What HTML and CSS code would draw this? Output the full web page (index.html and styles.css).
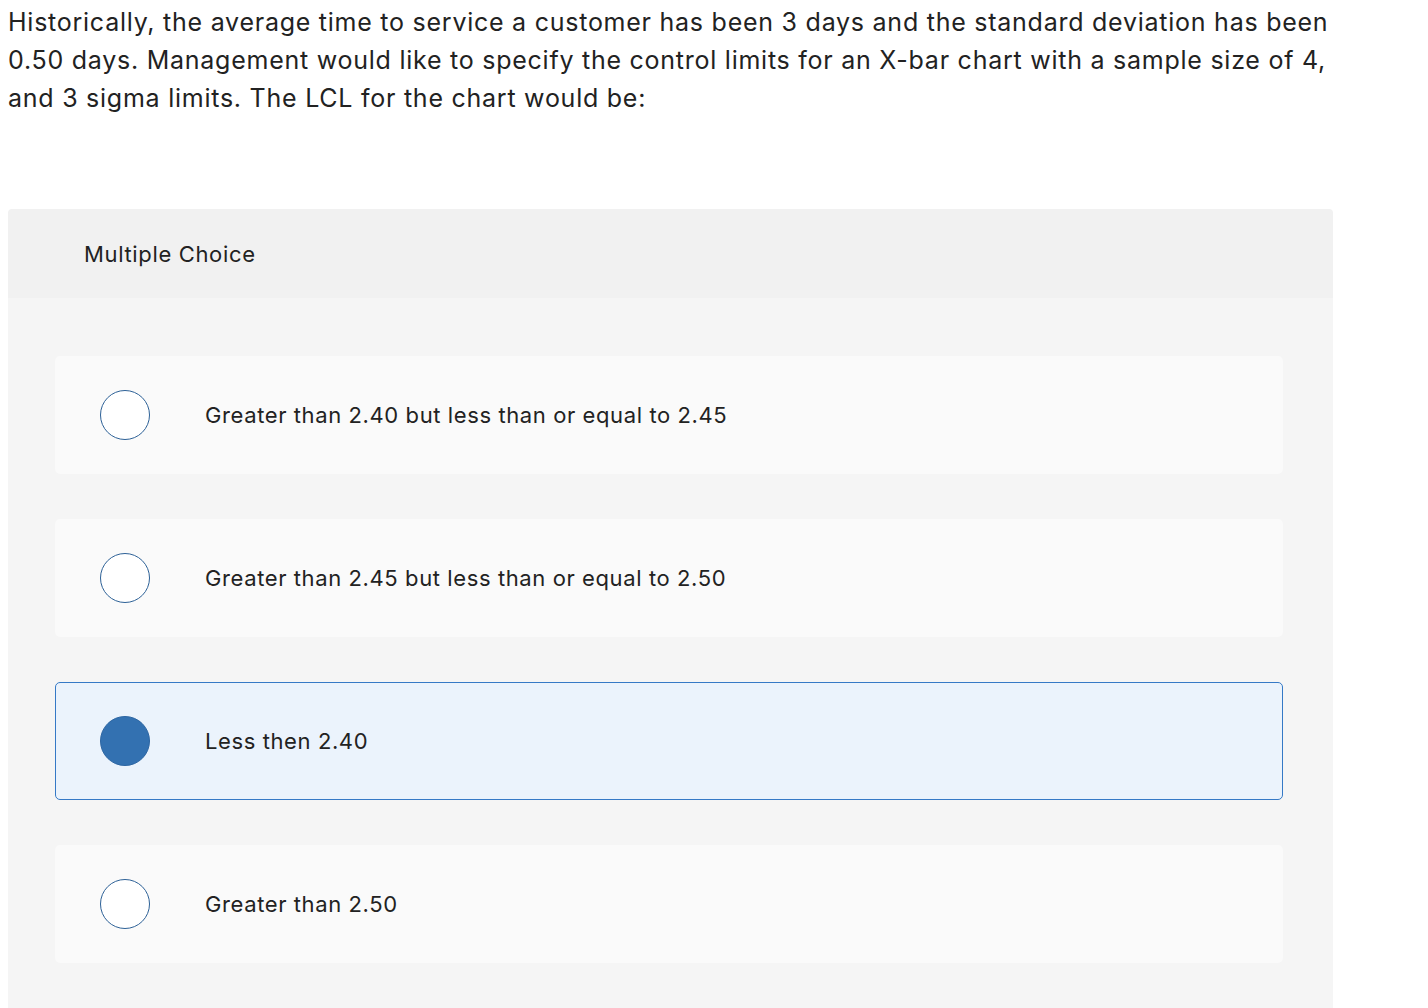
FILE: index.html
```html
<!DOCTYPE html>
<html>
<head>
<meta charset="utf-8">
<link rel="stylesheet" href="styles.css">
</head>
<body>
<div class="page">
  <p class="question">Historically, the average time to service a customer has been 3 days and the standard deviation has been 0.50 days. Management would like to specify the control limits for an X-bar chart with a sample size of 4, and 3 sigma limits. The LCL for the chart would be:</p>
  <div class="panel">
    <div class="panel-head">Multiple Choice</div>
    <div class="panel-body">
      <div class="option"><span class="radio"></span><span class="label">Greater than 2.40 but less than or equal to 2.45</span></div>
      <div class="option"><span class="radio"></span><span class="label">Greater than 2.45 but less than or equal to 2.50</span></div>
      <div class="option selected"><span class="radio"></span><span class="label">Less then 2.40</span></div>
      <div class="option"><span class="radio"></span><span class="label">Greater than 2.50</span></div>
    </div>
  </div>
</div>
</body>
</html>
```
FILE: styles.css
```css
html, body {
  margin: 0;
  padding: 0;
  background: #ffffff;
}
body {
  padding: 0 8px;
  font-family: Inter, "Open Sans", sans-serif;
  color: #222222;
  overflow: hidden;
  height: 1008px;
}
.page {
  width: 1325px;
}
.question {
  margin: 0;
  padding-top: 3px;
  font-size: 25px;
  letter-spacing: 0.75px;
  line-height: 38px;
  color: #222222;
}
.panel {
  margin-top: 92px;
  border-radius: 4px 4px 0 0;
  overflow: hidden;
}
.panel-head {
  background: #f1f1f1;
  height: 89px;
  display: flex;
  align-items: center;
  padding-left: 76px;
  font-size: 22px;
  letter-spacing: 0.65px;
  color: #222222;
}
.panel-body {
  background: #f5f5f5;
  padding: 58px 50px 60px 47px;
  display: flex;
  flex-direction: column;
  gap: 45px;
}
.option {
  background: #fafafa;
  border: 1px solid transparent;
  border-radius: 5px;
  height: 118px;
  box-sizing: border-box;
  display: flex;
  align-items: center;
  padding-left: 44px;
}
.radio {
  width: 50px;
  height: 50px;
  box-sizing: border-box;
  border: 1.5px solid #2d6197;
  border-radius: 50%;
  background: #ffffff;
  flex: none;
}
.label {
  margin-left: 55px;
  font-size: 22px;
  letter-spacing: 0.6px;
  color: #222222;
}
.option.selected {
  background: #ebf3fc;
  border-color: #3579c6;
}
.option.selected .radio {
  background: #3371b1;
  border-color: #2d66a3;
}
```
